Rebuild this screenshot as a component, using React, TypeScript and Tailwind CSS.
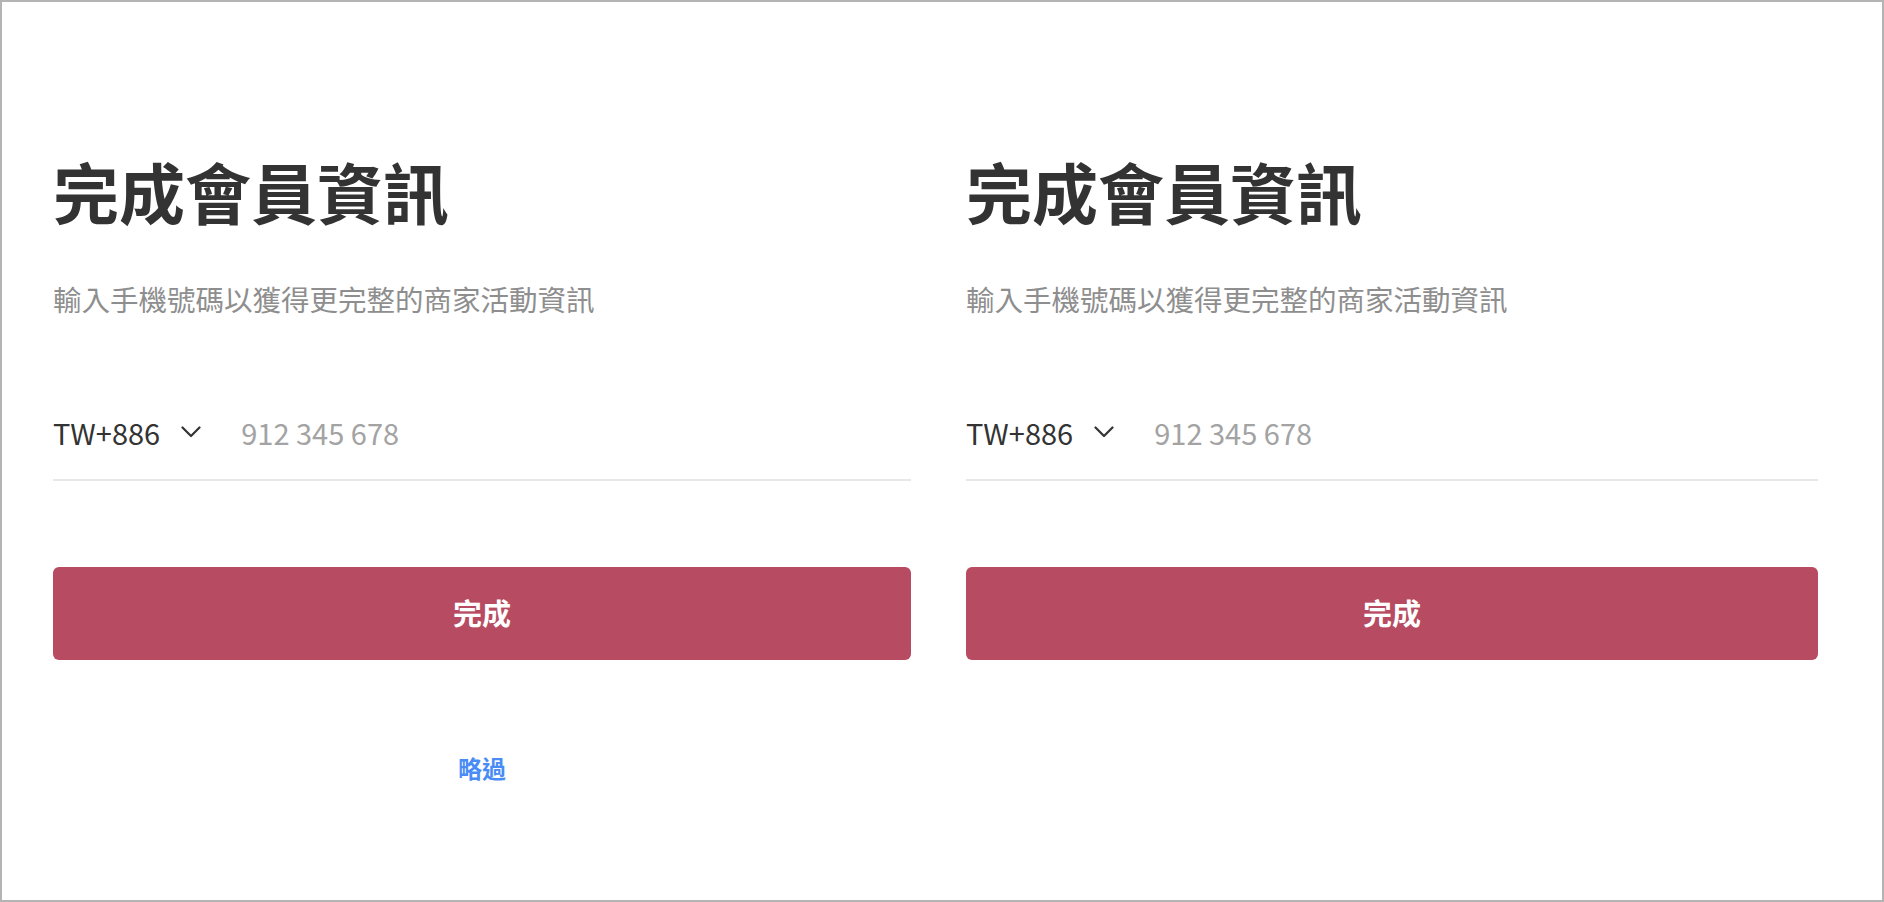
function MemberForm({ showSkip }: { showSkip?: boolean }) {
  return (
    <div className="flex flex-col">
      <h1 className="text-[66px] leading-none font-bold text-[#333333]">完成會員資訊</h1>
      <p className="mt-[62px] text-[28.5px] leading-none text-[#8e8e8e]">
        輸入手機號碼以獲得更完整的商家活動資訊
      </p>

      <div className="mt-[104px] flex items-center border-b-2 border-[#e8e8e8] pb-[32px]">
        <button className="flex items-center text-[29px] leading-none text-[#333333]">
          <span>TW+886</span>
          <svg className="ml-[21px]" width="20" height="12" viewBox="0 0 20 12" fill="none">
            <path d="M1.5 1.5 L10 10 L18.5 1.5" stroke="#333333" strokeWidth="2.2" strokeLinecap="round" strokeLinejoin="round" />
          </svg>
        </button>
        <input
          className="ml-[40px] h-[29px] min-w-0 flex-1 bg-transparent p-0 text-[29px] leading-none text-[#333333] outline-none placeholder:text-[#a3a3a3]"
          placeholder="912 345 678"
        />
      </div>

      <button className="mt-[86px] flex h-[93px] w-full items-center justify-center rounded-[6px] bg-[#b74b61] text-[29px] font-bold text-white">
        完成
      </button>

      {showSkip && (
        <button className="mt-[96px] self-center text-[24px] leading-none font-bold text-[#4a8cf5]">略過</button>
      )}
    </div>
  );
}

export default function App() {
  return (
    <div className="box-border h-screen w-full overflow-hidden border-2 border-[#b4b4b4] bg-white font-['Noto_Sans_CJK_TC',sans-serif]">
      <div className="flex pt-[155px] pl-[51px]">
        <div className="w-[858px]">
          <MemberForm showSkip />
        </div>
        <div className="ml-[55px] w-[852px]">
          <MemberForm />
        </div>
      </div>
    </div>
  );
}
